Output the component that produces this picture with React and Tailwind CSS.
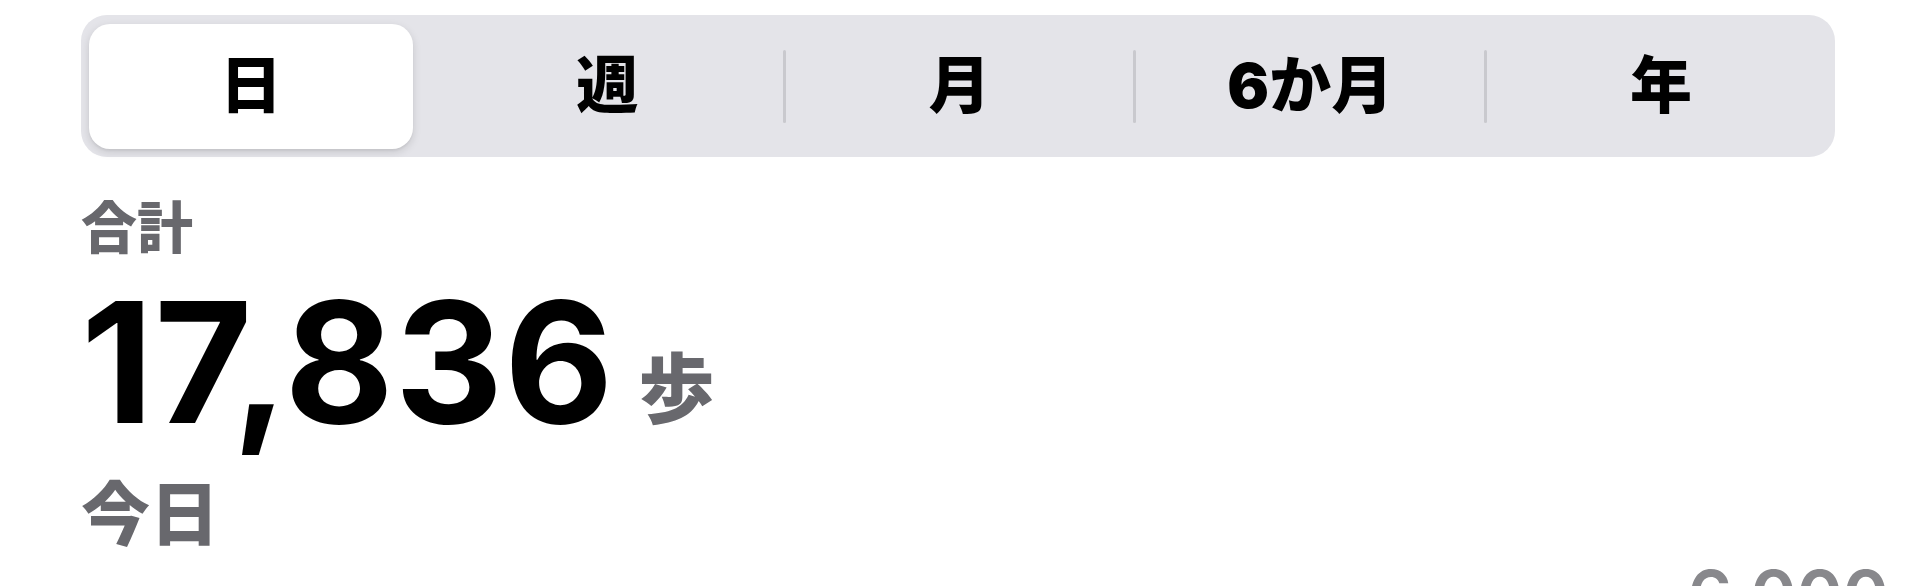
import { useState } from 'react';

const RANGES = ['日', '週', '月', '6か月', '年'];

function RangePicker({ value, onChange }) {
  return (
    <div className="grid grid-cols-5 h-[142px] rounded-[26px] bg-[#e4e4e9]">
      {RANGES.map((label, i) => {
        const active = i === value;
        // divider only between two unselected neighbours
        const showDivider = i > 0 && i !== value && i - 1 !== value;
        return (
          <button
            key={label}
            type="button"
            onClick={() => onChange(i)}
            className="flex items-center h-full"
          >
            {showDivider ? (
              <span className="w-[3px] h-[73px] rounded-full bg-[#c9c9ce] shrink-0" />
            ) : (
              <span className="w-0 shrink-0" />
            )}
            {active ? (
              <span className="ml-[8px] w-[324px] h-[125px] rounded-[21px] bg-white shadow-[0_3px_9px_rgba(0,0,0,0.13),0_2px_2px_rgba(0,0,0,0.04)] flex items-center justify-center text-[62px] font-black leading-none text-black">
                {label}
              </span>
            ) : (
              <span className="flex-1 text-center text-[62px] font-black leading-none text-black">
                {label}
              </span>
            )}
          </button>
        );
      })}
    </div>
  );
}

export default function App() {
  const [range, setRange] = useState(0);

  return (
    <div className="w-[1920px] h-[586px] overflow-hidden bg-white pl-[81px] pr-[85px] font-['Inter','Noto_Sans_CJK_JP',sans-serif]">
      <div className="pt-[15px]">
        <RangePicker value={range} onChange={setRange} />
      </div>

      {/* 合計 */}
      <div className="mt-[43px] text-[56px] font-black leading-none text-[#68686d]">合計</div>

      <div className="mt-[22px] flex items-baseline">
        <span className="text-[168px] font-bold leading-none tracking-[1px] text-black">17,836</span>
        <span className="relative -top-[6px] ml-[24px] text-[76px] font-black leading-none text-[#68686d]">歩</span>
      </div>

      <div className="mt-[35px] text-[69px] font-black leading-none text-[#68686d]">今日</div>

      {/* chart axis */}
      <div className="mt-[11px] -mr-[54px] flex justify-end">
        <span className="text-[70px] font-semibold leading-none text-[#88888c]">6,000</span>
      </div>
    </div>
  );
}
